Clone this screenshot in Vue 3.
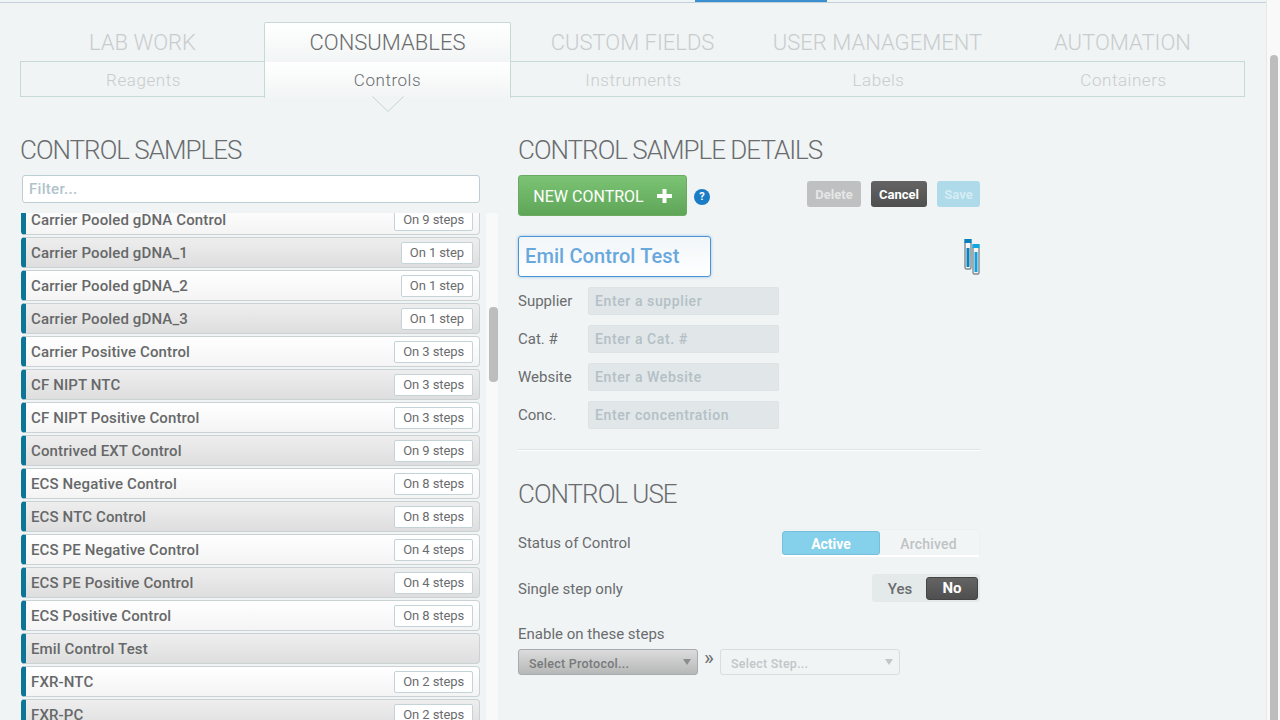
<template>
  <div class="page">
    <div class="topline"><span class="topline-mark"></span></div>

    <div class="content">
      <!-- top level tabs -->
      <nav class="tabs">
        <a v-for="t in tabs" :key="t" class="tab" :class="{ active: t === 'CONSUMABLES' }">{{ t }}</a>
      </nav>
      <nav class="subtabs">
        <a v-for="s in subtabs" :key="s" class="subtab" :class="{ active: s === 'Controls' }">
          {{ s }}
          <svg v-if="s === 'Controls'" class="pointer" width="32" height="17" viewBox="0 0 32 17">
            <path d="M0.5 0.5 L16 15.5 L31.5 0.5" fill="#f0f4f5" stroke="#c2d4d4" stroke-width="1" />
          </svg>
        </a>
      </nav>

      <div class="columns">
        <!-- left column -->
        <section class="left">
          <h2 class="heading">CONTROL SAMPLES</h2>
          <div class="filter">Filter...</div>
          <div class="list-wrap">
            <div class="list">
              <div v-for="(r, i) in rows" :key="r.name" class="row" :class="i % 2 ? 'even' : 'odd'">
                <span class="row-name">{{ r.name }}</span>
                <span v-if="r.steps" class="row-steps">On {{ r.steps }} {{ r.steps === 1 ? 'step' : 'steps' }}</span>
              </div>
            </div>
            <div class="list-track"><div class="list-thumb"></div></div>
          </div>
        </section>

        <!-- right column -->
        <section class="right">
          <h2 class="heading">CONTROL SAMPLE DETAILS</h2>
          <div class="actions">
            <button class="new-btn">NEW CONTROL
              <svg width="15" height="14" viewBox="0 0 15 14"><path d="M5.5 0h4v5H15v4H9.5v5h-4V9H0V5h5.5z" fill="#fff" /></svg>
            </button>
            <span class="help">?</span>
            <span class="spacer"></span>
            <button class="small-btn delete">Delete</button>
            <button class="small-btn cancel">Cancel</button>
            <button class="small-btn save">Save</button>
          </div>

          <div class="name-row">
            <div class="name-input">Emil Control Test</div>
            <svg class="tubes" width="16" height="36" viewBox="0 0 16 36">
              <rect x="1" y="3" width="6" height="27" rx="1.5" fill="#f4f7f8" stroke="#7d8a94" stroke-width="1.4" />
              <rect x="0.3" y="0" width="7.4" height="4" fill="#0a7fb8" />
              <rect x="2.5" y="9" width="3" height="19" fill="#0a82bc" />
              <rect x="9" y="8" width="6" height="27" rx="1.5" fill="#f4f7f8" stroke="#7d8a94" stroke-width="1.4" />
              <rect x="8.3" y="5" width="7.4" height="4" fill="#12a5e0" />
              <rect x="10.5" y="13" width="3" height="20" fill="#12a0dc" />
            </svg>
          </div>

          <div v-for="f in fields" :key="f.label" class="field">
            <label class="field-label">{{ f.label }}</label>
            <div class="field-input">{{ f.hint }}</div>
          </div>

          <hr class="divider" />

          <h2 class="heading use">CONTROL USE</h2>

          <div class="opt-row status">
            <span class="opt-label">Status of Control</span>
            <div class="seg-status">
              <span class="seg-on">Active</span>
              <span class="seg-off">Archived</span>
            </div>
          </div>
          <div class="opt-row single">
            <span class="opt-label">Single step only</span>
            <div class="seg-yn">
              <span class="yn-off">Yes</span>
              <span class="yn-on">No</span>
            </div>
          </div>

          <div class="opt-label enable">Enable on these steps</div>
          <div class="selects">
            <div class="select protocol">Select Protocol...<i class="caret"></i></div>
            <span class="chev">»</span>
            <div class="select step">Select Step...<i class="caret"></i></div>
          </div>
        </section>
      </div>
    </div>

    <div class="page-track"><div class="page-thumb"></div></div>
  </div>
</template>

<script setup>
const tabs = ['LAB WORK', 'CONSUMABLES', 'CUSTOM FIELDS', 'USER MANAGEMENT', 'AUTOMATION']
const subtabs = ['Reagents', 'Controls', 'Instruments', 'Labels', 'Containers']

const rows = [
  { name: 'Carrier Pooled gDNA Control', steps: 9 },
  { name: 'Carrier Pooled gDNA_1', steps: 1 },
  { name: 'Carrier Pooled gDNA_2', steps: 1 },
  { name: 'Carrier Pooled gDNA_3', steps: 1 },
  { name: 'Carrier Positive Control', steps: 3 },
  { name: 'CF NIPT NTC', steps: 3 },
  { name: 'CF NIPT Positive Control', steps: 3 },
  { name: 'Contrived EXT Control', steps: 9 },
  { name: 'ECS Negative Control', steps: 8 },
  { name: 'ECS NTC Control', steps: 8 },
  { name: 'ECS PE Negative Control', steps: 4 },
  { name: 'ECS PE Positive Control', steps: 4 },
  { name: 'ECS Positive Control', steps: 8 },
  { name: 'Emil Control Test', steps: 0 },
  { name: 'FXR-NTC', steps: 2 },
  { name: 'FXR-PC', steps: 2 }
]

const fields = [
  { label: 'Supplier', hint: 'Enter a supplier' },
  { label: 'Cat. #', hint: 'Enter a Cat. #' },
  { label: 'Website', hint: 'Enter a Website' },
  { label: 'Conc.', hint: 'Enter concentration' }
]
</script>

<style>
html, body {
  margin: 0;
  height: 100%;
  overflow: hidden;
  background: #f0f4f5;
}
</style>

<style scoped>
.page {
  display: flex;
  width: 1280px;
  height: 720px;
  position: relative;
  overflow: hidden;
  background: #f0f4f5;
  font-family: Roboto, "Liberation Sans", sans-serif;
  color: #6a6c6e;
}

.topline {
  position: absolute;
  top: 0;
  left: 0;
  width: 1266px;
  height: 3px;
  border-bottom: 1px solid #c3d0d9;
  box-sizing: border-box;
}

.topline-mark {
  position: absolute;
  left: 695px;
  top: 0;
  width: 132px;
  height: 2px;
  background: #3a8fd0;
}

.content {
  width: 1266px;
  padding: 22px 0 0 20px;
  box-sizing: border-box;
}

.tabs {
  display: grid;
  grid-template-columns: repeat(5, 245px);
  height: 39px;
}

.tab {
  font-size: 22px;
  font-weight: 300;
  line-height: 42px;
  text-align: center;
  color: #c9cccd;
  letter-spacing: 0;
}

.tab.active {
  color: #6a6c6e;
  height: 40px;
  margin: 0 -1px;
  background: linear-gradient(#fff, #f2f5f5);
  border: 1px solid #c6d8d8;
  border-bottom: 0;
  border-radius: 2px 2px 0 0;
  box-sizing: border-box;
  line-height: 40px;
  position: relative;
  z-index: 1;
}

.subtabs {
  display: grid;
  grid-template-columns: repeat(5, 245px);
  height: 36px;
  box-sizing: border-box;
  border: 1px solid #c6d8d8;
  width: 1225px;
}

.subtab {
  font-size: 17px;
  font-weight: 300;
  line-height: 36px;
  text-align: center;
  color: #c9cccd;
  letter-spacing: 0.55px;
}

.subtab.active {
  color: #6a6c6e;
  position: relative;
  z-index: 1;
  background: linear-gradient(#fff, #f2f5f5);
  border-left: 1px solid #c6d8d8;
  border-right: 1px solid #c6d8d8;
  margin-left: -2px;
  margin-right: 0;
}

.pointer {
  position: absolute;
  left: 107px;
  top: 34px;
}

.columns {
  display: flex;
  margin-top: 36px;
  gap: 18px;
}

.left {
  width: 480px;
  flex: none;
}

.right {
  width: 462px;
  flex: none;
}

.heading {
  margin: 0;
  font-size: 26px;
  font-weight: 300;
  line-height: 34px;
  letter-spacing: -1px;
  color: #6a6c6e;
}

.filter {
  margin: 8px 0 0 2px;
  width: 458px;
  height: 28px;
  box-sizing: border-box;
  background: #fff;
  border: 1px solid #bccdd3;
  border-radius: 3px;
  padding-left: 6px;
  font-size: 15px;
  font-weight: 500;
  line-height: 26px;
  letter-spacing: 0.3px;
  color: #b0c3cb;
}

.list-wrap {
  display: flex;
  margin-top: 10px;
  height: 507px;
  overflow: hidden;
}

.list {
  width: 459px;
  margin-left: 1px;
  flex: none;
  margin-top: -9px;
}

.row {
  height: 31px;
  margin-bottom: 2px;
  box-sizing: border-box;
  display: flex;
  align-items: center;
  justify-content: space-between;
  padding: 0 6px 0 5px;
  border: 1px solid #cbd2d4;
  border-left: 5px solid #0d7696;
  border-radius: 4px;
}

.row.odd {
  background: linear-gradient(#fff, #f4f4f4);
}

.row.even {
  background: linear-gradient(#eeeeee, #dedede);
}

.row-name {
  font-size: 15px;
  font-weight: 500;
  color: #666869;
  letter-spacing: 0.13px;
}

.row-steps {
  height: 22px;
  box-sizing: border-box;
  padding: 0 8px;
  background: #fff;
  border: 1px solid #c4d3d8;
  border-radius: 2px;
  font-size: 13px;
  line-height: 20px;
  color: #6a6c6e;
  letter-spacing: -0.1px;
}

.list-track {
  width: 12px;
  margin-left: 6px;
  background: #f8f9f9;
  position: relative;
}

.list-thumb {
  position: absolute;
  left: 3px;
  top: 94px;
  width: 9px;
  height: 75px;
  border-radius: 4px;
  background: #bdbdbd;
}

.actions {
  display: flex;
  align-items: center;
  margin-top: 8px;
  height: 41px;
}

.new-btn {
  width: 169px;
  height: 41px;
  padding: 1px 0 0;
  background: linear-gradient(#7cc474, #5ea558);
  border: 1px solid #6aaa63;
  border-radius: 3px;
  color: #fff;
  font-family: inherit;
  font-size: 16px;
  font-weight: 400;
  letter-spacing: 0;
  display: flex;
  align-items: center;
  justify-content: center;
  gap: 13px;
}

.help {
  width: 16px;
  height: 16px;
  margin: 3px 0 0 7px;
  border-radius: 50%;
  background: #1a7cc4;
  color: #fff;
  font-size: 11px;
  font-weight: 700;
  line-height: 16px;
  text-align: center;
}

.spacer {
  flex: 1;
}

.small-btn {
  height: 26px;
  margin: 0 0 3px 10px;
  padding: 0;
  border: 0;
  border-radius: 3px;
  color: #fff;
  font-family: inherit;
  font-size: 13px;
  font-weight: 700;
}

.delete {
  width: 54px;
  background: #bfc0c1;
  color: #e6e6e6;
}

.cancel {
  width: 56px;
  background: linear-gradient(#646464, #4f4f4f);
}

.save {
  width: 43px;
  background: #aedaea;
  color: #d5ecf4;
}

.name-row {
  display: flex;
  align-items: center;
  justify-content: space-between;
  margin-top: 20px;
}

.name-input {
  width: 193px;
  height: 41px;
  box-sizing: border-box;
  background: linear-gradient(#f2f6f9, #fff);
  border: 1px solid #4a94d4;
  box-shadow: 0 0 3px #8fbde4;
  border-radius: 3px;
  padding-left: 6px;
  font-size: 20px;
  font-weight: 500;
  line-height: 39px;
  letter-spacing: 0.1px;
  color: #68a8dc;
}

.field {
  display: flex;
  align-items: center;
  height: 28px;
  margin-top: 10px;
}

.field-label {
  width: 70px;
  font-size: 15px;
  color: #6a6c6e;
}

.field-input {
  width: 191px;
  height: 28px;
  box-sizing: border-box;
  background: #e1e6e8;
  border: 1px solid #dde3e5;
  border-radius: 2px;
  padding-left: 6px;
  font-size: 14px;
  font-weight: 500;
  line-height: 26px;
  color: #b3c0c6;
  letter-spacing: 0.6px;
}

.divider {
  margin: 20px 0 0;
  border: 0;
  height: 1px;
  background: #dfe3e3;
  box-shadow: 0 1px 0 #fff;
}

.heading.use {
  margin-top: 27px;
}

.opt-row {
  display: flex;
  align-items: center;
  justify-content: space-between;
}

.opt-row.status {
  margin-top: 18px;
  height: 28px;
}

.opt-row.single {
  margin-top: 17px;
  height: 28px;
}

.opt-label {
  font-size: 15px;
  color: #6a6c6e;
}

.single .opt-label {
  margin-top: 2px;
}

.seg-status {
  display: flex;
  width: 200px;
  height: 28px;
  box-sizing: border-box;
  padding: 1px 2px 1px 1px;
  background: #f2f5f6;
  border: 1px solid #eef1f2;
  border-bottom: 2px solid #fff;
  border-radius: 3px;
}

.seg-on {
  width: 98px;
  height: 24px;
  box-sizing: border-box;
  background: #85d0ea;
  border: 1px solid #74bfdc;
  border-radius: 3px;
  color: #fff;
  font-size: 14px;
  font-weight: 700;
  line-height: 24px;
  text-align: center;
}

.seg-off {
  flex: 1;
  font-size: 14px;
  font-weight: 500;
  line-height: 26px;
  letter-spacing: 0.2px;
  text-align: center;
  color: #bfc3c5;
}

.seg-yn {
  display: flex;
  width: 108px;
  height: 28px;
  box-sizing: border-box;
  padding: 3px 2px 2px;
  background: #e4e9ea;
  border-radius: 3px;
}

.yn-off {
  flex: 1;
  font-size: 15px;
  font-weight: 500;
  line-height: 25px;
  text-align: center;
  color: #6a6c6e;
}

.yn-on {
  width: 52px;
  height: 23px;
  box-sizing: border-box;
  background: linear-gradient(#646464, #4f4f4f);
  border: 1px solid #454545;
  border-radius: 3px;
  color: #fff;
  font-size: 15px;
  font-weight: 700;
  line-height: 21px;
  text-align: center;
}

.enable {
  margin-top: 21px;
  line-height: 22px;
}

.selects {
  display: flex;
  align-items: center;
  margin-top: 4px;
}

.select {
  height: 26px;
  box-sizing: border-box;
  border-radius: 3px;
  padding-left: 10px;
  font-size: 12.5px;
  font-weight: 500;
  line-height: 27px;
  letter-spacing: 0.25px;
  position: relative;
}

.protocol {
  width: 180px;
  background: linear-gradient(#dcdcdc, #b6b7b7);
  border: 1px solid #a8abad;
  color: #777a7c;
}

.step {
  width: 180px;
  background: #f0f4f5;
  border: 1px solid #d8dee0;
  color: #c2c6c8;
}

.chev {
  width: 22px;
  text-align: center;
  font-size: 21px;
  line-height: 20px;
  margin-top: -8px;
  color: #6a6c6e;
}

.caret {
  position: absolute;
  right: 6px;
  top: 9px;
  width: 0;
  height: 0;
  border-left: 4px solid transparent;
  border-right: 4px solid transparent;
  border-top: 6px solid #8a8d8f;
}

.step .caret {
  border-top-color: #c2c6c8;
}

.page-track {
  position: absolute;
  right: 0;
  top: 0;
  width: 14px;
  height: 720px;
  background: #f9f9f9;
  border-left: 1px solid #e8e8e8;
  box-sizing: border-box;
}

.page-thumb {
  position: absolute;
  left: 3px;
  top: 55px;
  width: 8px;
  height: 665px;
  border-radius: 4px 4px 0 0;
  background: #bdbdbd;
}
</style>
